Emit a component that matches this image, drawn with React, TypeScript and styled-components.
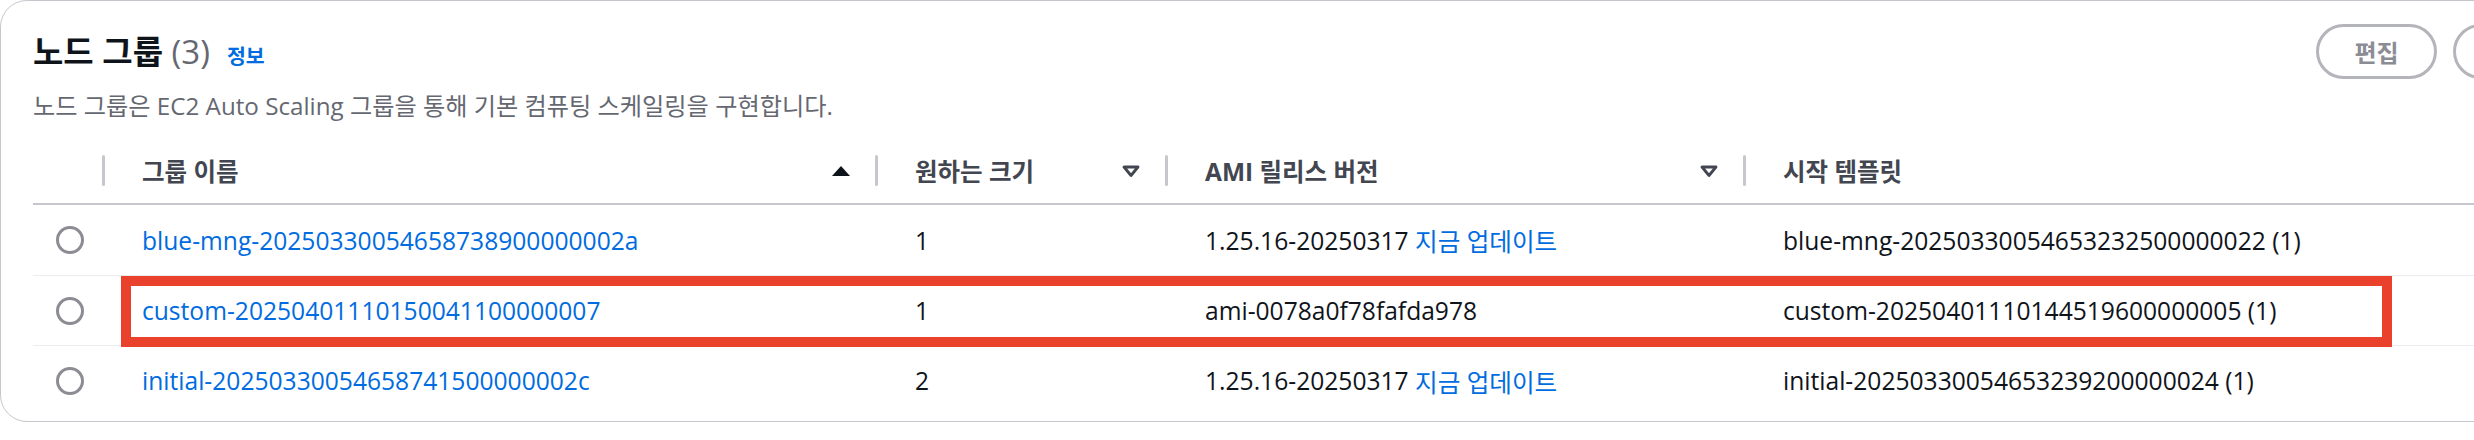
import React from "react";
import styled, { createGlobalStyle } from "styled-components";

const GlobalStyle = createGlobalStyle`
  html, body {
    margin: 0;
    padding: 0;
    background: #ffffff;
    overflow: hidden;
  }
  body {
    font-family: "Open Sans", "Noto Sans CJK KR", sans-serif;
    color: #0f141a;
    -webkit-font-smoothing: antialiased;
  }
  * { box-sizing: border-box; }
`;

const Card = styled.section`
  position: relative;
  width: 2605px;
  height: 422px;
  border: 1px solid #c6c6cd;
  border-radius: 27px;
  background: #ffffff;
`;

const Header = styled.div`
  padding: 23px 30px 0 32px;
`;

const TitleRow = styled.div`
  display: flex;
  align-items: center;
  justify-content: space-between;
  height: 55px;
`;

const TitleGroup = styled.div`
  display: flex;
  align-items: baseline;
`;

const Title = styled.h2`
  margin: 0;
  font-size: 33px;
  line-height: 38px;
  font-weight: 700;
  color: #0f141a;
`;

const Counter = styled.span`
  font-weight: 400;
  color: #656871;
`;

const InfoLink = styled.a`
  margin-left: 17px;
  font-size: 20.5px;
  font-weight: 700;
  color: #006ce0;
  text-decoration: none;
`;

const Actions = styled.div`
  display: flex;
  gap: 16px;
`;

const Button = styled.button`
  height: 55px;
  min-width: 121px;
  padding: 0 34px;
  border: 3px solid #b4b4bb;
  border-radius: 30px;
  background: #ffffff;
  color: #8c8c94;
  font-family: inherit;
  font-size: 24px;
  font-weight: 700;
  white-space: nowrap;
`;

const Description = styled.p`
  margin: 12px 0 0 0;
  font-size: 24.2px;
  line-height: 30px;
  color: #656871;
`;

const Table = styled.div`
  margin: 17px 0 0 32px;
`;

const cols = "72px 773px 290px 578px 1fr";

const HeadRow = styled.div`
  display: grid;
  grid-template-columns: ${cols};
  height: 67px;
  border-bottom: 2px solid #c6c6cd;
`;

const HeadCell = styled.div<{ $edge?: boolean }>`
  display: flex;
  align-items: center;
  justify-content: ${(p) => (p.$edge ? "flex-end" : "flex-start")};
  padding-left: ${(p) => (p.$edge ? "0" : "37px")};
`;

const HeadLabel = styled.span`
  flex: 1;
  font-size: 24.5px;
  font-weight: 700;
  color: #424650;
  white-space: nowrap;
`;

const SortIcon = styled.svg`
  width: 20px;
  height: 12px;
  margin-right: 24px;
  flex: none;
`;

const Divider = styled.span`
  width: 3px;
  height: 31px;
  border-radius: 2px;
  background: #c6c6cd;
  flex: none;
`;

const BodyRow = styled.div<{ $first?: boolean }>`
  display: grid;
  grid-template-columns: ${cols};
  height: 70px;
  border-top: ${(p) => (p.$first ? "none" : "1px solid #ebebf0")};
`;

const Cell = styled.div<{ $center?: boolean }>`
  display: flex;
  align-items: center;
  justify-content: ${(p) => (p.$center ? "center" : "flex-start")};
  padding-left: ${(p) => (p.$center ? "0" : "37px")};
  font-size: 24.6px;
  color: #0f141a;
  white-space: nowrap;
`;

const Radio = styled.span`
  width: 28px;
  height: 28px;
  border: 3px solid #8c8c94;
  border-radius: 50%;
  background: #ffffff;
  margin-left: 2px;
`;

const Link = styled.a`
  color: #006ce0;
  text-decoration: none;
`;

const Highlight = styled.div`
  position: absolute;
  left: 120px;
  top: 275px;
  width: 2271px;
  height: 71px;
  border: 10px solid #e9412b;
  pointer-events: none;
`;

const SortedUp = () => (
  <SortIcon viewBox="0 0 20 12">
    <polygon points="1,11 19,11 10,1" fill="#0f141a" />
  </SortIcon>
);

const Sortable = () => (
  <SortIcon viewBox="0 0 20 12">
    <path
      d="M3 2 H17 L10 10.5 Z"
      fill="none"
      stroke="#424650"
      strokeWidth="2.8"
      strokeLinejoin="round"
    />
  </SortIcon>
);

type Row = {
  name: string;
  size: string;
  ami: string;
  update: boolean;
  template: string;
};

const rows: Row[] = [
  {
    name: "blue-mng-20250330054658738900000002a",
    size: "1",
    ami: "1.25.16-20250317",
    update: true,
    template: "blue-mng-20250330054653232500000022 (1)",
  },
  {
    name: "custom-20250401110150041100000007",
    size: "1",
    ami: "ami-0078a0f78fafda978",
    update: false,
    template: "custom-20250401110144519600000005 (1)",
  },
  {
    name: "initial-20250330054658741500000002c",
    size: "2",
    ami: "1.25.16-20250317",
    update: true,
    template: "initial-20250330054653239200000024 (1)",
  },
];

export default function App() {
  return (
    <>
      <GlobalStyle />
      <Card>
        <Header>
          <TitleRow>
            <TitleGroup>
              <Title>
                노드 그룹 <Counter>(3)</Counter>
              </Title>
              <InfoLink>정보</InfoLink>
            </TitleGroup>
            <Actions>
              <Button>편집</Button>
              <Button>삭제</Button>
            </Actions>
          </TitleRow>
          <Description>
            노드 그룹은 EC2 Auto Scaling 그룹을 통해 기본 컴퓨팅 스케일링을 구현합니다.
          </Description>
        </Header>
        <Table>
          <HeadRow>
            <HeadCell $edge>
              <Divider />
            </HeadCell>
            <HeadCell>
              <HeadLabel>그룹 이름</HeadLabel>
              <SortedUp />
              <Divider />
            </HeadCell>
            <HeadCell>
              <HeadLabel>원하는 크기</HeadLabel>
              <Sortable />
              <Divider />
            </HeadCell>
            <HeadCell>
              <HeadLabel>AMI 릴리스 버전</HeadLabel>
              <Sortable />
              <Divider />
            </HeadCell>
            <HeadCell>
              <HeadLabel>시작 템플릿</HeadLabel>
            </HeadCell>
          </HeadRow>
          {rows.map((r, i) => (
            <BodyRow key={r.name} $first={i === 0}>
              <Cell $center>
                <Radio />
              </Cell>
              <Cell>
                <Link>{r.name}</Link>
              </Cell>
              <Cell>{r.size}</Cell>
              <Cell>
                {r.ami}
                {r.update && <Link>&nbsp;지금 업데이트</Link>}
              </Cell>
              <Cell>{r.template}</Cell>
            </BodyRow>
          ))}
        </Table>
        <Highlight />
      </Card>
    </>
  );
}
